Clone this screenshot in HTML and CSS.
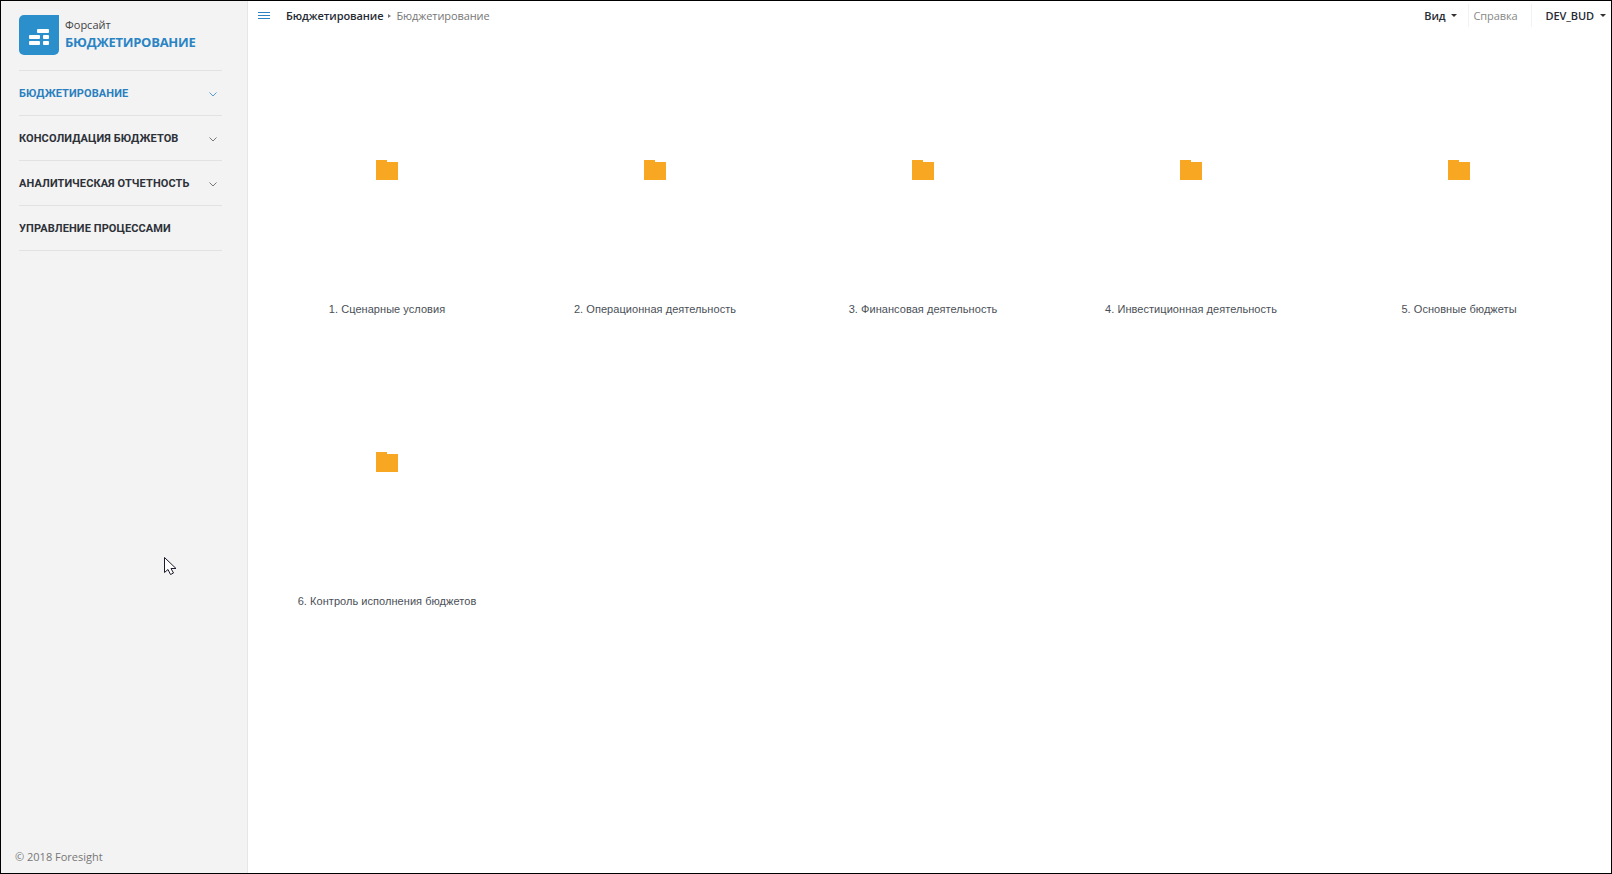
FILE: index.html
```html
<!DOCTYPE html>
<html lang="ru">
<head>
    <meta charset="UTF-8">
    <title>Бюджетирование</title>
    <link rel="stylesheet" href="styles.css">
</head>
<body>
    <div class="app">
        <aside class="sidebar">
            <div class="brand">
                <svg class="brand-logo" width="40" height="40" viewBox="0 0 40 40">
                    <path d="M5 0H40V35a5 5 0 0 1-5 5H5a5 5 0 0 1-5-5V5a5 5 0 0 1 5-5z" fill="#2a8fcb"/>
                    <g fill="#fff">
                        <rect x="18" y="14" width="12" height="4" rx="1"/>
                        <rect x="10" y="20" width="11" height="4" rx="1"/>
                        <rect x="24" y="20" width="6" height="4" rx="1"/>
                        <rect x="10" y="26" width="11" height="4" rx="1"/>
                        <rect x="24" y="26" width="6" height="4" rx="1"/>
                    </g>
                </svg>
                <div class="brand-text">
                    <div class="brand-company">Форсайт</div>
                    <div class="brand-name">БЮДЖЕТИРОВАНИЕ</div>
                </div>
            </div>
            <nav class="menu">
                <a class="menu-item active">БЮДЖЕТИРОВАНИЕ<svg class="chevron" width="8" height="5" viewBox="0 0 8 5"><path d="M.5.5 4 4 7.500.5" fill="none" stroke="currentColor"/></svg></a>
                <a class="menu-item">КОНСОЛИДАЦИЯ БЮДЖЕТОВ<svg class="chevron" width="8" height="5" viewBox="0 0 8 5"><path d="M.5.5 4 4 7.500.5" fill="none" stroke="currentColor"/></svg></a>
                <a class="menu-item">АНАЛИТИЧЕСКАЯ ОТЧЕТНОСТЬ<svg class="chevron" width="8" height="5" viewBox="0 0 8 5"><path d="M.5.5 4 4 7.500.5" fill="none" stroke="currentColor"/></svg></a>
                <a class="menu-item">УПРАВЛЕНИЕ ПРОЦЕССАМИ</a>
            </nav>
            <div class="copyright">© 2018 Foresight</div>
        </aside>
        <main class="content">
            <header class="topbar">
                <div class="burger"><span></span><span></span><span></span></div>
                <div class="crumb-main">Бюджетирование</div>
                <div class="crumb-sep"></div>
                <div class="crumb-sub">Бюджетирование</div>
                <div class="topbar-right">
                    <a class="top-link bold">Вид<span class="caret"></span></a>
                    <a class="top-link help">Справка</a>
                    <a class="top-link bold user">DEV_BUD<span class="caret"></span></a>
                </div>
            </header>
            <div class="folders">
                <div class="folder">
                    <svg class="folder-icon" width="22" height="20" viewBox="0 0 22 20"><path d="M0 0H11V2H22V20H0z" fill="#f8a723"/></svg>
                    <div class="folder-label">1. Сценарные условия</div>
                </div>
                <div class="folder">
                    <svg class="folder-icon" width="22" height="20" viewBox="0 0 22 20"><path d="M0 0H11V2H22V20H0z" fill="#f8a723"/></svg>
                    <div class="folder-label">2. Операционная деятельность</div>
                </div>
                <div class="folder">
                    <svg class="folder-icon" width="22" height="20" viewBox="0 0 22 20"><path d="M0 0H11V2H22V20H0z" fill="#f8a723"/></svg>
                    <div class="folder-label">3. Финансовая деятельность</div>
                </div>
                <div class="folder">
                    <svg class="folder-icon" width="22" height="20" viewBox="0 0 22 20"><path d="M0 0H11V2H22V20H0z" fill="#f8a723"/></svg>
                    <div class="folder-label">4. Инвестиционная деятельность</div>
                </div>
                <div class="folder">
                    <svg class="folder-icon" width="22" height="20" viewBox="0 0 22 20"><path d="M0 0H11V2H22V20H0z" fill="#f8a723"/></svg>
                    <div class="folder-label">5. Основные бюджеты</div>
                </div>
                <div class="folder">
                    <svg class="folder-icon" width="22" height="20" viewBox="0 0 22 20"><path d="M0 0H11V2H22V20H0z" fill="#f8a723"/></svg>
                    <div class="folder-label">6. Контроль исполнения бюджетов</div>
                </div>
            </div>
        </main>
    </div>
    <svg class="cursor" width="15" height="20" viewBox="0 0 15 20">
        <path d="M1.500 1.500V16.500L5 13.500 7.500 18.500 10.500 17 8 12.500H13z" fill="#fff" stroke="#1c1c2c"/>
    </svg>
</body>
</html>
```

FILE: styles.css
```css
html, body {
    margin: 0;
    height: 100%;
    overflow: hidden;
}
.app {
    display: flex;
    box-sizing: border-box;
    height: 874px;
    border: 1px solid #000;
    background-color: #fff;
}
.sidebar {
    display: flex;
    flex-direction: column;
    box-sizing: border-box;
    width: 247px;
    flex-shrink: 0;
    padding: 14px 0 0 18px;
    background-color: #f3f3f3;
    border-right: 1px solid #e6e6e6;
}
.brand {
    display: flex;
    height: 40px;
    padding-bottom: 15px;
}
.brand-text {
    margin-left: 6px;
    padding-top: 2px;
}
.brand-company {
    font: 11px/15px "Open Sans", sans-serif;
    color: #444;
}
.brand-name {
    margin-top: 1px;
    font: 700 13px/18px "Open Sans", sans-serif;
    letter-spacing: -.25px;
    color: #2a84c4;
}
.menu {
    width: 203px;
    border-top: 1px solid #e2e2e2;
}
.menu-item {
    display: flex;
    align-items: center;
    justify-content: space-between;
    box-sizing: border-box;
    height: 45px;
    padding: 1px 5px 0 0;
    border-bottom: 1px solid #e2e2e2;
    font: 700 11px Roboto, sans-serif;
    letter-spacing: .1px;
    color: #2d3138;
}
.menu-item.active {
    color: #2a7fbf;
}
.chevron {
    margin-top: 1px;
    color: #777;
}
.active .chevron {
    color: #5a9bcb;
}
.copyright {
    margin: auto 0 0 -4px;
    padding-bottom: 9px;
    font: 11px/14px "Open Sans", sans-serif;
    color: #777;
}
.content {
    flex: 1;
    min-width: 0;
}
.topbar {
    display: flex;
    align-items: center;
    height: 29px;
    padding: 0 5px 1px 10px;
    font: 11px "Open Sans", sans-serif;
    letter-spacing: -.1px;
}
.burger {
    width: 12px;
    margin-right: 16px;
}
.burger span {
    display: block;
    height: 1px;
    margin: 2px 0;
    background-color: #2a84c4;
}
.crumb-main {
    font-weight: 600;
    color: #262b33;
}
.crumb-sep {
    width: 0;
    height: 0;
    margin: 0 5px;
    border-left: 3px solid #777;
    border-top: 2px solid transparent;
    border-bottom: 2px solid transparent;
}
.crumb-sub {
    color: #777;
}
.topbar-right {
    display: flex;
    align-items: center;
    margin-left: auto;
}
.top-link {
    display: flex;
    align-items: center;
    color: #262b33;
}
.top-link.bold {
    font-weight: 600;
}
.top-link.help {
    margin-left: 11px;
    padding: 4px 14px 4px 4px;
    color: #888;
    border-left: 1px solid #f2f2f2;
    border-right: 1px solid #f2f2f2;
}
.top-link.user {
    margin-left: 13px;
}
.caret {
    width: 0;
    height: 0;
    margin-left: 6px;
    border-top: 3px solid #333;
    border-left: 3px solid transparent;
    border-right: 3px solid transparent;
}
.folders {
    display: grid;
    grid-template-columns: repeat(5, 268px);
    grid-auto-rows: 292px;
    padding: 129px 0 0 5px;
}
.folder {
    display: flex;
    flex-direction: column;
    align-items: center;
}
.folder-icon {
    display: block;
}
.folder-label {
    margin-top: 121px;
    font: 11px/16px "Liberation Sans", Arial, sans-serif;
    letter-spacing: .05px;
    color: #4a4f57;
}
.cursor {
    position: absolute;
    left: 163px;
    top: 556px;
}
```
